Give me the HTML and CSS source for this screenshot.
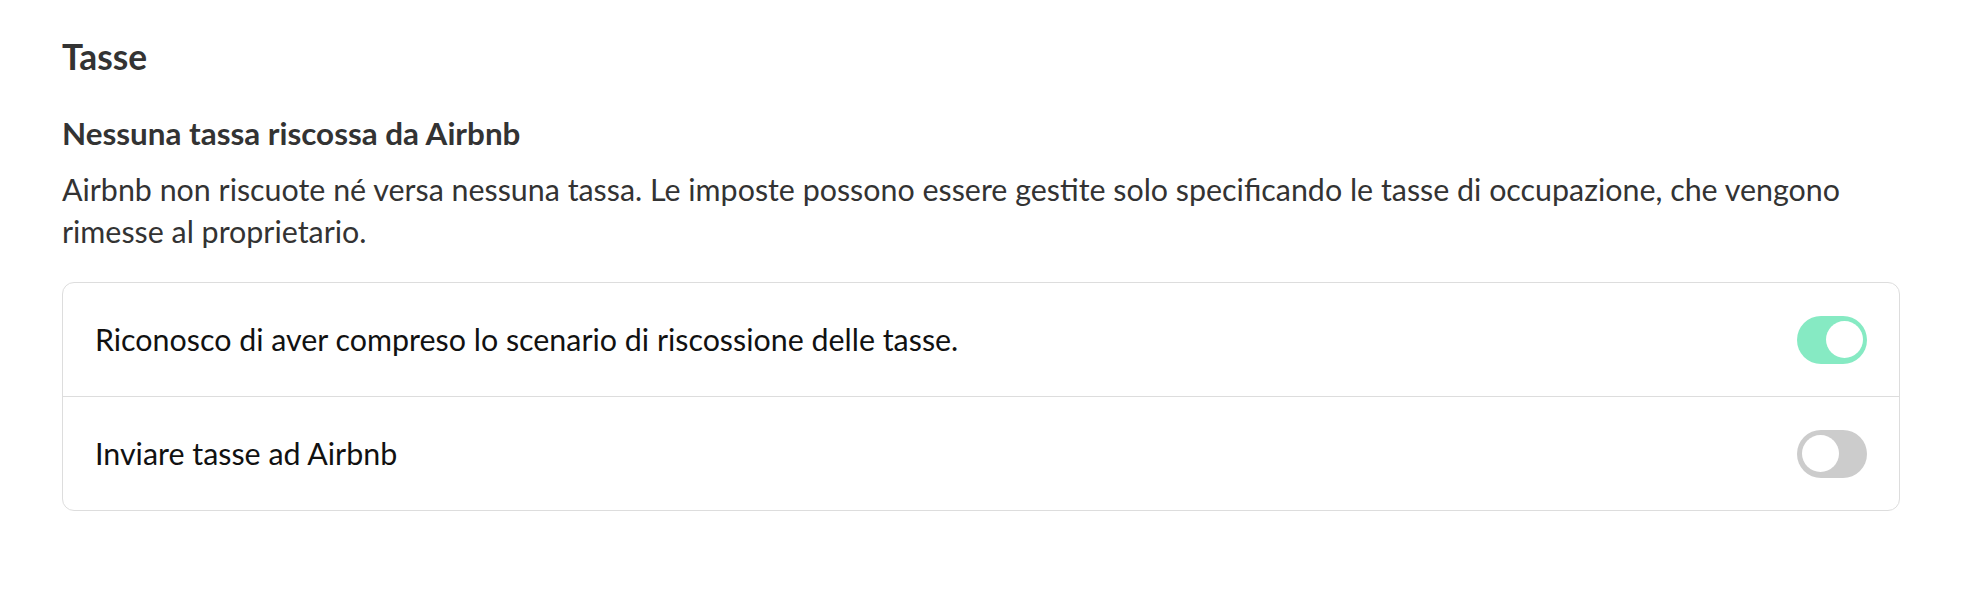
FILE: index.html
```html
<!DOCTYPE html>
<html lang="it">
<head>
    <meta charset="UTF-8">
    <meta name="viewport" content="width=device-width, initial-scale=1.0">
    <title>Tasse</title>
    <link rel="stylesheet" href="styles.css">
</head>
<body>
<main class="taxes">
    <h2 class="section-title">Tasse</h2>
    <h3 class="notice-title">Nessuna tassa riscossa da Airbnb</h3>
    <p class="notice-text">Airbnb non riscuote né versa nessuna tassa. Le imposte possono essere gestite solo specificando le tasse di occupazione, che vengono rimesse al proprietario.</p>

    <div class="options-card">
        <div class="option-row">
            <span class="option-label">Riconosco di aver compreso lo scenario di riscossione delle tasse.</span>
            <button type="button" class="switch is-on" role="switch" aria-checked="true"><span class="knob"></span></button>
        </div>
        <div class="option-row">
            <span class="option-label">Inviare tasse ad Airbnb</span>
            <button type="button" class="switch" role="switch" aria-checked="false"><span class="knob"></span></button>
        </div>
    </div>
</main>
<script>
    document.querySelectorAll('.switch').forEach((sw) => {
        sw.addEventListener('click', () => {
            const on = sw.classList.toggle('is-on');
            sw.setAttribute('aria-checked', on ? 'true' : 'false');
        });
    });
</script>
</body>
</html>
```
FILE: styles.css
```css
:root {
    --text: #333;
    --border: #dddddd;
    --switch-on: #86eac3;
    --switch-off: #cccccc;
}
body {
    margin: 0;
    background: #fff;
    font-family: Lato, 'Noto Sans', sans-serif;
    color: var(--text);
}
.taxes {
    padding: 36px 74px 40px 62px;
}
.section-title {
    margin: 0;
    font-size: 35.3px;
    font-weight: 700;
    line-height: 1.2;
}
.notice-title {
    margin: 37px 0 0 0;
    font-size: 31.4px;
    font-weight: 700;
    line-height: 1.2;
}
.notice-text {
    margin: 16px 0 0 0;
    font-size: 30.4px;
    line-height: 41.5px;
}
.options-card {
    margin-top: 30px;
    border: 1px solid var(--border);
    border-radius: 12px;
}
.option-row {
    display: flex;
    align-items: center;
    justify-content: space-between;
    height: 113px;
    padding: 0 32px;
}
.option-row + .option-row {
    border-top: 1px solid var(--border);
}
.option-label {
    font-size: 30.4px;
    line-height: 1.2;
    color: #111;
}
.switch {
    display: flex;
    align-items: center;
    width: 70px;
    height: 48px;
    padding: 0 4px 0 5px;
    border: none;
    border-radius: 24px;
    background: var(--switch-off);
    box-sizing: border-box;
    cursor: pointer;
}
.switch.is-on {
    background: var(--switch-on);
    justify-content: flex-end;
}
.knob {
    width: 37px;
    height: 37px;
    border-radius: 50%;
    background: #fff;
}
```
